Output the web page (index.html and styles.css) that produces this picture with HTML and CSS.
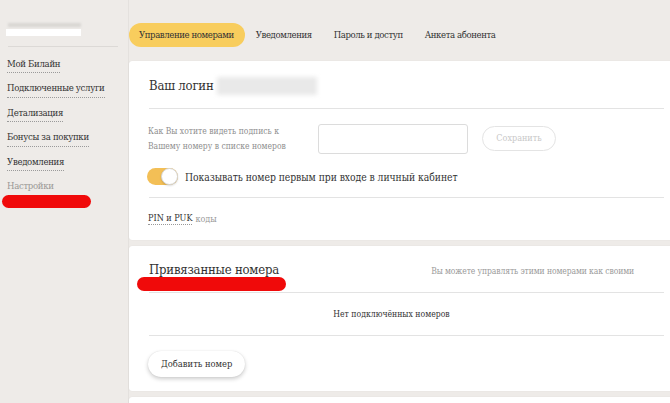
FILE: index.html
```html
<!DOCTYPE html>
<html lang="ru">
<head>
<meta charset="utf-8">
<link rel="stylesheet" href="styles.css">
</head>
<body>
<div class="page">
  <aside class="sidebar">
    <div class="user">
      <div class="user-name"></div>
      <div class="user-num"></div>
    </div>
    <nav class="menu">
      <a class="menu-item">Мой Билайн</a>
      <a class="menu-item">Подключенные услуги</a>
      <a class="menu-item">Детализация</a>
      <a class="menu-item">Бонусы за покупки</a>
      <a class="menu-item">Уведомления</a>
      <span class="menu-item current">Настройки</span>
      <div class="redact redact-side"></div>
    </nav>
  </aside>
  <main class="main">
    <div class="tabs">
      <span class="tab active">Управление номерами</span>
      <span class="tab">Уведомления</span>
      <span class="tab">Пароль и доступ</span>
      <span class="tab">Анкета абонента</span>
    </div>
    <section class="card">
      <div class="login-row">
        <h2 class="title">Ваш логин</h2>
        <div class="login-blur"></div>
      </div>
      <div class="form-row">
        <div class="label">Как Вы хотите видеть подпись к<br>Вашему номеру в списке номеров</div>
        <div class="input"></div>
        <span class="btn-save">Сохранить</span>
      </div>
      <div class="toggle-row">
        <span class="toggle"><span class="knob"></span></span>
        <span class="toggle-text">Показывать номер первым при входе в личный кабинет</span>
      </div>
      <div class="pin-row">
        <span class="pin-link">PIN и PUK</span> <span class="pin-muted">коды</span>
      </div>
    </section>
    <section class="card card2">
      <div class="linked-head">
        <h2 class="title">Привязанные номера</h2>
        <span class="hint">Вы можете управлять этими номерами как своими</span>
        <div class="redact redact-title"></div>
      </div>
      <div class="empty">Нет подключённых номеров</div>
      <div class="add-row">
        <span class="btn-add">Добавить номер</span>
      </div>
    </section>
    <section class="card card3"></section>
  </main>
</div>
</body>
</html>
```

FILE: styles.css
```css
* { box-sizing: border-box; }
html, body { margin: 0; padding: 0; }
body {
  background: #eeebe8;
  font-family: "DejaVu Serif Condensed", "DejaVu Serif", serif;
  color: #333;
  width: 670px;
  height: 403px;
  overflow: hidden;
}
.page {
  display: flex;
  height: 403px;
}
.sidebar {
  width: 129px;
  flex: none;
  border-right: 1px solid #e4e1de;
}
.user {
  height: 47px;
  padding-top: 23px;
  margin: 0 10px 0 8px;
  border-bottom: 1px solid #dcd9d6;
}
.user-name {
  width: 73px;
  height: 4px;
  background: #d9d7d4;
  filter: blur(1px);
}
.user-num {
  width: 75px;
  height: 7px;
  margin-top: 2px;
  margin-left: -2px;
  background: #fff;
}
.menu {
  display: flex;
  flex-direction: column;
  align-items: flex-start;
  padding: 10px 0 0 7px;
  gap: 8px;
}
.menu-item {
  font-size: 9.5px;
  letter-spacing: -0.3px;
  line-height: 14px;
  height: 16.4px;
  color: #333;
  border-bottom: 1px dotted #9a9a9a;
}
.menu-item.current {
  color: #9a9896;
  border-bottom: none;
}
.redact {
  background: #f00a0a;
  border-radius: 8px;
}
.redact-side {
  width: 89px;
  height: 13px;
  margin: -8px 0 0 -5px;
}
.main {
  flex: none;
  width: 560px;
}
.tabs {
  display: flex;
  align-items: flex-start;
  padding-top: 23px;
  height: 61px;
}
.tab {
  font-size: 9.5px;
  letter-spacing: -0.4px;
  line-height: 24px;
  height: 24px;
  padding: 0 11px;
  color: #333;
  border-radius: 12px;
}
.tab.active {
  background: #f8cd5d;
  padding: 0 11px 0 10px;
}
.card {
  background: #fff;
  width: 555px;
  border-radius: 3px;
  box-shadow: 0 0 1px rgba(0,0,0,0.12);
  padding: 0 20px;
  margin-bottom: 6px;
}
.title {
  margin: 0;
  font-size: 13px;
  letter-spacing: -0.2px;
  font-weight: normal;
  color: #333;
  line-height: 18px;
}
.login-row {
  display: flex;
  align-items: center;
  gap: 3px;
  height: 48px;
  border-bottom: 1px solid #e3e3e3;
  padding-top: 2px;
}
.login-blur {
  width: 100px;
  height: 18px;
  background: #e9e9e9;
  filter: blur(2px);
}
.form-row {
  display: flex;
  align-items: center;
  height: 53px;
  padding-top: 6px;
}
.label {
  width: 170px;
  font-size: 8.5px;
  line-height: 15px;
  color: #8e8e8e;
  margin-left: -1px;
}
.input {
  width: 150px;
  height: 30px;
  border: 1px solid #dcdcdc;
  border-radius: 3px;
}
.btn-save {
  margin-left: 14px;
  height: 25px;
  width: 74px;
  border: 1px solid #e4e4e4;
  border-radius: 13px;
  font-size: 9px;
  line-height: 23px;
  text-align: center;
  color: #c8c8c8;
}
.toggle-row {
  display: flex;
  align-items: center;
  height: 36px;
  border-bottom: 1px solid #e3e3e3;
  padding-bottom: 6px;
}
.toggle {
  position: relative;
  width: 31px;
  height: 17px;
  border-radius: 9px;
  background: #f3bf56;
  margin-left: -2px;
}
.knob {
  position: absolute;
  right: 0;
  top: 0;
  width: 17px;
  height: 17px;
  border-radius: 50%;
  background: #fff;
  border: 1px solid #d6d6d6;
  box-shadow: 0 1px 2px rgba(0,0,0,0.15);
}
.toggle-text {
  font-size: 10.3px;
  letter-spacing: -0.05px;
  margin-left: 7px;
  color: #333;
}
.pin-row {
  height: 42px;
  display: flex;
  align-items: center;
  font-size: 9px;
  gap: 3px;
  margin-left: -1px;
}
.pin-link {
  color: #333;
  border-bottom: 1px dotted #999;
  line-height: 11px;
}
.pin-muted { color: #9a9a9a; }
.card2 { position: relative; }
.linked-head {
  position: relative;
  display: flex;
  align-items: center;
  justify-content: space-between;
  height: 47px;
  padding-top: 2px;
  border-bottom: 1px solid #e3e3e3;
  padding-right: 30px;
}
.hint {
  font-size: 8.5px;
  letter-spacing: -0.1px;
  color: #9a9a9a;
  margin-top: 2px;
}
.redact-title {
  position: absolute;
  left: -12px;
  top: 31px;
  width: 149px;
  height: 14px;
}
.empty {
  height: 43px;
  display: flex;
  align-items: center;
  justify-content: center;
  padding-right: 30px;
  font-size: 8.6px;
  color: #333;
  border-bottom: 1px solid #e3e3e3;
}
.add-row {
  height: 55px;
  display: flex;
  align-items: center;
}
.btn-add {
  height: 26px;
  padding: 0 13px;
  line-height: 26px;
  font-size: 9.3px;
  border-radius: 13px;
  background: #fff;
  box-shadow: 0 2px 4px rgba(0,0,0,0.2), 0 0 1px rgba(0,0,0,0.15);
  color: #333;
  margin-left: -1px;
}
.card3 { height: 20px; }
```
